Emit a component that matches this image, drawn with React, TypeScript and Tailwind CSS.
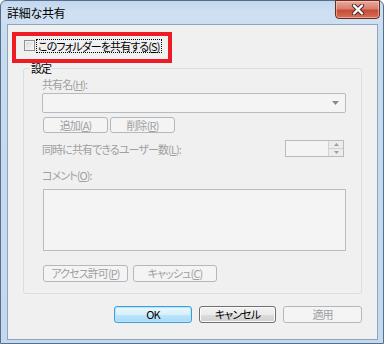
import React from "react";

const U = ({ c }: { c: string }) => <span className="underline underline-offset-[1px]">{c}</span>;

function Btn({
  children,
  className = "",
  variant = "disabled",
}: {
  children: React.ReactNode;
  className?: string;
  variant?: "disabled" | "normal" | "default";
}) {
  const base =
    "flex items-center justify-center rounded-[3px] border leading-none shrink-0 whitespace-nowrap";
  const v =
    variant === "disabled"
      ? "border-[#b5b8ba] bg-[#f4f4f4] text-[#a0a0a0]"
      : variant === "default"
      ? "border-[#3c9fd8] bg-[linear-gradient(to_bottom,#eaf6fd_0%,#d9f0fc_50%,#bee6fd_51%,#a7d9f5_100%)] text-black shadow-[inset_0_0_0_1px_#b9e6ff]"
      : "border-[#707070] bg-[linear-gradient(to_bottom,#f2f2f2_0%,#ebebeb_50%,#dddddd_51%,#cfcfcf_100%)] text-black shadow-[inset_0_0_0_1px_#fbfbfb]";
  return <div className={`${base} ${v} ${className}`}>{children}</div>;
}

export default function App() {
  return (
    <div
      className="w-[385px] h-[344px] bg-white overflow-hidden text-[11px] tracking-[-0.9px] [font-feature-settings:'palt']"
      style={{ fontFamily: '"Noto Sans CJK JP", "Noto Sans", sans-serif' }}
    >
      <div className="w-[384px] h-[344px] flex flex-col rounded-t-[6px] border border-[#55708f] bg-[linear-gradient(to_bottom,#c3d8ee_0px,#cfe0f2_12px,#c8dcf0_40px,#c4d8ee_100%)] px-[6px] pb-[3px] pr-[5px]">
        {/* title bar */}
        <div className="h-[23px] flex items-start justify-between shrink-0">
          <div className="pt-[5px] leading-[14px] text-black text-[12px] tracking-[-0.3px]">詳細な共有</div>
          <div className="-mt-[1px] mr-[-2px] w-[45px] h-[19px] rounded-b-[4px] border border-[#6d2a20] bg-[linear-gradient(to_bottom,#e9a99c_0%,#d8806e_45%,#c74d36_55%,#d4705a_100%)] flex items-center justify-center shadow-[inset_0_0_0_1px_rgba(255,220,210,0.5)]">
            <svg width="14" height="11" viewBox="0 0 14 11">
              <path d="M3 1.5 L11 9.5 M11 1.5 L3 9.5" stroke="#4a2a26" strokeWidth="4.2" strokeLinecap="round" />
              <path d="M3 1.5 L11 9.5 M11 1.5 L3 9.5" stroke="#ffffff" strokeWidth="2.4" strokeLinecap="round" />
            </svg>
          </div>
        </div>

        {/* client area */}
        <div className="flex-1 border border-[#8fa5bd] bg-[#f0f0f0] flex flex-col">
          {/* annotated checkbox */}
          <div className="ml-[4px] mt-[7px] w-[160px] h-[31px] border-4 border-[#ed1c24] flex items-start pt-[3px] pl-[8px]">
            <div className="mt-[1px] w-[11px] h-[11px] border border-[#8e8f8f] bg-[linear-gradient(135deg,#d8d8d8,#f7f7f7)] shadow-[inset_0_0_0_1px_#f4f4f4] shrink-0" />
            <div className="ml-[1px] h-[14px] px-[1px] border border-dotted border-black leading-[12px] text-black whitespace-nowrap">
              このフォルダーを共有する(<U c="S" />)
            </div>
          </div>

          {/* group box */}
          <fieldset className="ml-[15px] mr-[15px] -mt-[2px] rounded-[3px] border border-[#d5dfe5] pl-[18px] pr-[15px] pb-[11px] flex flex-col">
            <legend className="-ml-[12px] px-[1px] leading-[14px] text-black">設定</legend>
            <div className="mt-[2px] h-[14px] leading-[14px] text-[#a0a0a0] whitespace-nowrap">
              共有名(<U c="H" />):
            </div>
            <div className="mt-[2px] h-[20px] rounded-[2px] border border-[#b8bcbf] bg-[#f4f4f4] flex items-center justify-end pr-[6px]">
              <svg width="7" height="4" viewBox="0 0 7 4">
                <path d="M0 0 H7 L3.5 4 Z" fill="#8a8a8a" />
              </svg>
            </div>
            <div className="mt-[4px] flex gap-[2px] pl-[1px]">
              <Btn className="w-[65px] h-[16px]">
                追加(<U c="A" />)
              </Btn>
              <Btn className="w-[65px] h-[16px]">
                削除(<U c="R" />)
              </Btn>
            </div>
            <div className="mt-[7px] h-[17px] flex items-center justify-between">
              <div className="leading-[14px] text-[#a0a0a0] whitespace-nowrap">
                同時に共有できるユーザー数(<U c="L" />):
              </div>
              <div className="mr-[2px] w-[59px] h-[17px] border border-[#b8bcbf] bg-[#f4f4f4] flex justify-end">
                <div className="w-[15px] h-full flex flex-col border-l border-[#d0d3d5]">
                  <div className="flex-1 flex items-center justify-center border-b border-[#d0d3d5] bg-[#ececec]">
                    <svg width="5" height="3" viewBox="0 0 5 3">
                      <path d="M0 3 H5 L2.5 0 Z" fill="#a0a0a0" />
                    </svg>
                  </div>
                  <div className="flex-1 flex items-center justify-center bg-[#ececec]">
                    <svg width="5" height="3" viewBox="0 0 5 3">
                      <path d="M0 0 H5 L2.5 3 Z" fill="#a0a0a0" />
                    </svg>
                  </div>
                </div>
              </div>
            </div>
            <div className="mt-[11px] h-[14px] leading-[14px] text-[#a0a0a0] whitespace-nowrap">
              コメント(<U c="O" />):
            </div>
            <div className="mt-[7px] ml-[1px] h-[62px] border border-[#b8bcbf] bg-[#f4f4f4]" />
            <div className="mt-[14px] flex gap-[5px] pl-[1px]">
              <Btn className="w-[85px] h-[17px]">
                アクセス許可(<U c="P" />)
              </Btn>
              <Btn className="w-[84px] h-[17px]">
                キャッシュ(<U c="C" />)
              </Btn>
            </div>
          </fieldset>

          {/* dialog buttons */}
          <div className="mt-[12px] flex justify-end gap-[7px] pr-[15px]">
            <Btn variant="default" className="w-[78px] h-[17px]">
              OK
            </Btn>
            <Btn variant="normal" className="w-[77px] h-[17px]">
              キャンセル
            </Btn>
            <Btn className="w-[79px] h-[17px]">適用</Btn>
          </div>
        </div>
      </div>
    </div>
  );
}
